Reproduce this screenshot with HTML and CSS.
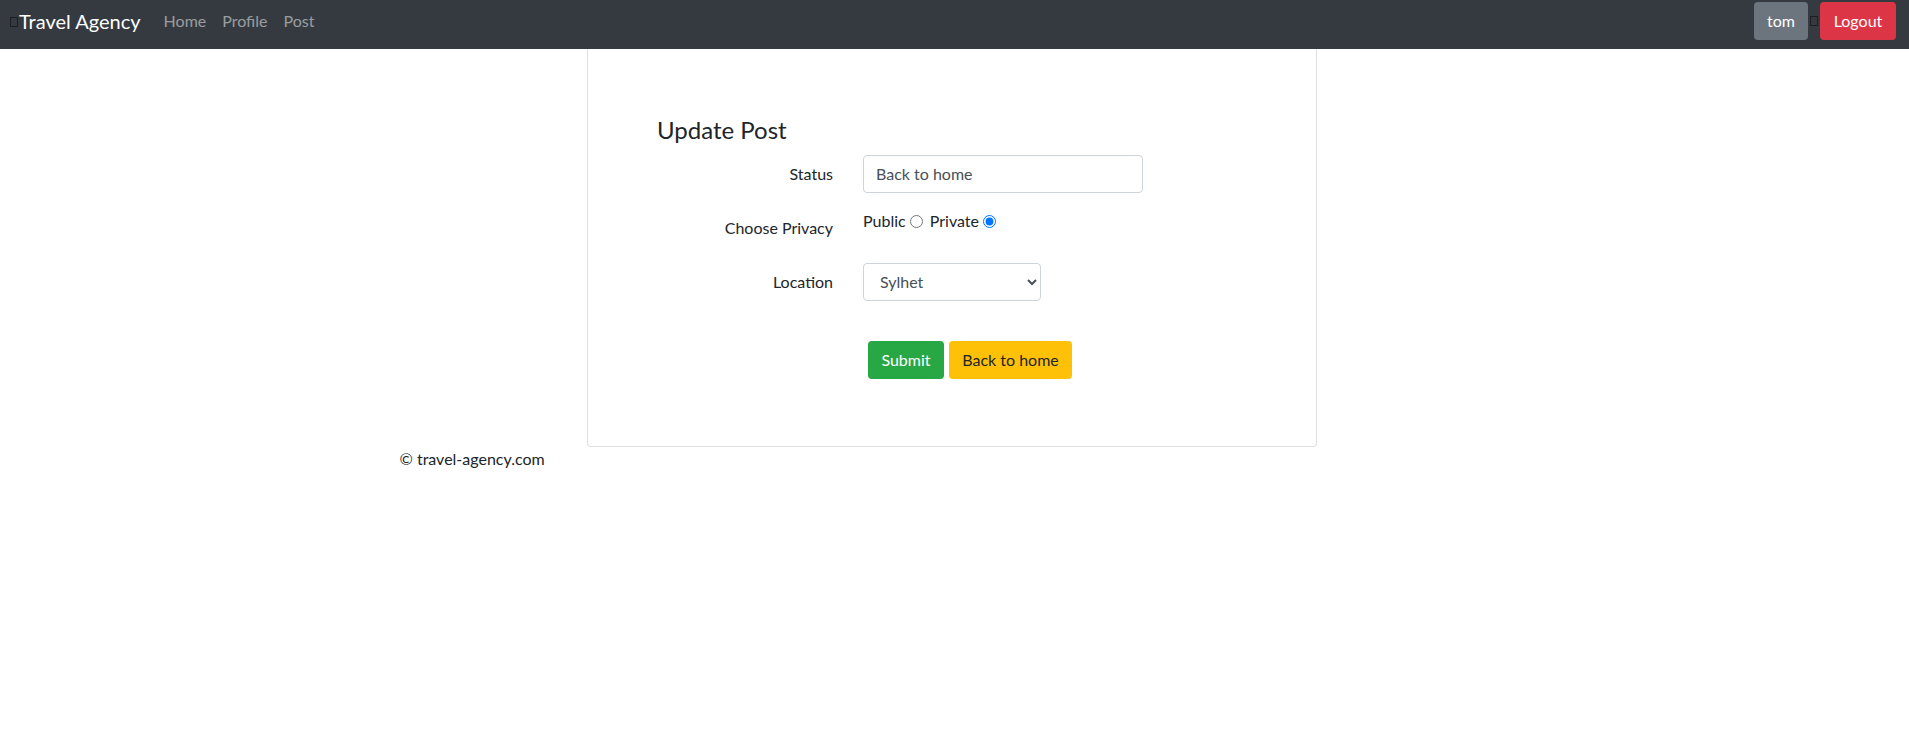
FILE: index.html
```html
<!DOCTYPE html>
<html lang="en">
<head>
<meta charset="utf-8">
<title>Update Post</title>
<link rel="stylesheet" href="styles.css">
</head>
<body>
<nav class="navbar">
  <a class="brand" href="#"><span class="tofu"></span>Travel Agency</a>
  <ul class="nav">
    <li><a class="nav-link" href="#">Home</a></li>
    <li><a class="nav-link" href="#">Profile</a></li>
    <li><a class="nav-link" href="#">Post</a></li>
  </ul>
  <div class="nav-right">
    <a class="btn btn-secondary" href="#">tom</a>
    <span class="tofu tofu-right"></span>
    <a class="btn btn-danger" href="#">Logout</a>
  </div>
</nav>
<main class="container">
  <div class="card">
    <h4 class="title">Update Post</h4>
    <form class="form">
      <div class="form-row">
        <label class="col-label" for="status">Status</label>
        <input class="form-control status-input" id="status" type="text" value="Back to home">
      </div>
      <div class="form-row">
        <label class="col-label">Choose Privacy</label>
        <div class="radios">Public<input type="radio" name="privacy"> Private<input type="radio" name="privacy" checked></div>
      </div>
      <div class="form-row">
        <label class="col-label" for="location">Location</label>
        <select class="form-control select-input" id="location"><option>Sylhet</option></select>
      </div>
      <div class="actions">
        <button class="btn btn-success" type="button">Submit</button>
        <a class="btn btn-warning" href="#">Back to home</a>
      </div>
    </form>
  </div>
  <footer class="footer">© travel-agency.com</footer>
</main>
</body>
</html>
```
FILE: styles.css
```css
* { box-sizing: border-box; }
html, body { margin: 0; padding: 0; }
body {
  font-family: "Lato", "Open Sans", "Liberation Sans", sans-serif;
  font-size: 16px;
  line-height: 1.5;
  color: #212529;
  background: #fff;
}
a { text-decoration: none; }

.navbar {
  display: flex;
  align-items: center;
  height: 49px;
  padding: 2px 13px 9px 10px;
  background: #343a40;
}
.brand {
  display: flex;
  align-items: center;
  color: #fff;
  font-size: 20px;
  line-height: 30px;
  margin-right: 15px;
}
.tofu {
  display: inline-block;
  width: 8px;
  height: 10px;
  border: 1px solid #1d1f22;
  margin-right: 1px;
  margin-top: 2px;
}
.nav {
  display: flex;
  list-style: none;
  margin: 0;
  padding: 0;
}
.nav-link {
  display: block;
  padding: 0 8px;
  color: rgba(255, 255, 255, 0.5);
  line-height: 24px;
}
.nav-right {
  margin-left: auto;
  display: flex;
  align-items: center;
}
.tofu-right { margin: 0 2px; }

.btn {
  display: inline-block;
  font-family: inherit;
  font-size: 16px;
  line-height: 24px;
  padding: 7px 12px;
  border: 0;
  border-radius: 4px;
  text-align: center;
  cursor: pointer;
  vertical-align: middle;
}
.btn-secondary { background: #6c757d; color: #fff; width: 54px; padding: 7px 0; }
.btn-danger { background: #dc3545; color: #fff; width: 76px; padding: 7px 0; }
.btn-success { background: #28a745; color: #fff; width: 76px; padding: 7px 0; }
.btn-warning { background: #ffc107; color: #212529; width: 123px; padding: 7px 0; }

.container {
  width: 1140px;
  margin: 0 auto;
  padding: 0 15px;
}
.card {
  width: 730px;
  margin-left: 187.5px;
  border: 1px solid rgba(0, 0, 0, 0.125);
  border-top: 0;
  border-radius: 0 0 4px 4px;
  padding: 67px 0 67px 69px;
}
.title {
  margin: 0 0 10px;
  font-size: 24px;
  font-weight: 400;
  line-height: 1.2;
}
.form-row {
  display: grid;
  grid-template-columns: 176px auto;
  column-gap: 30px;
  align-items: start;
  margin-bottom: 16px;
}
.col-label {
  text-align: right;
  padding: 7px 0;
  line-height: 24px;
}
.form-control {
  height: 38px;
  font-family: inherit;
  font-size: 16px;
  line-height: 24px;
  color: #495057;
  background: #fff;
  border: 1px solid #ced4da;
  border-radius: 4px;
  padding: 6px 12px;
}
.status-input { width: 280px; }
.select-input { width: 178px; padding-left: 12px; }
.radios {
  line-height: 24px;
}
.radios input {
  margin: 3px 3px 0 4px;
  vertical-align: -1px;
}
.actions {
  margin: 40px 0 0 211px;
  display: flex;
  gap: 5px;
}
.footer {
  line-height: 24px;
}
```
